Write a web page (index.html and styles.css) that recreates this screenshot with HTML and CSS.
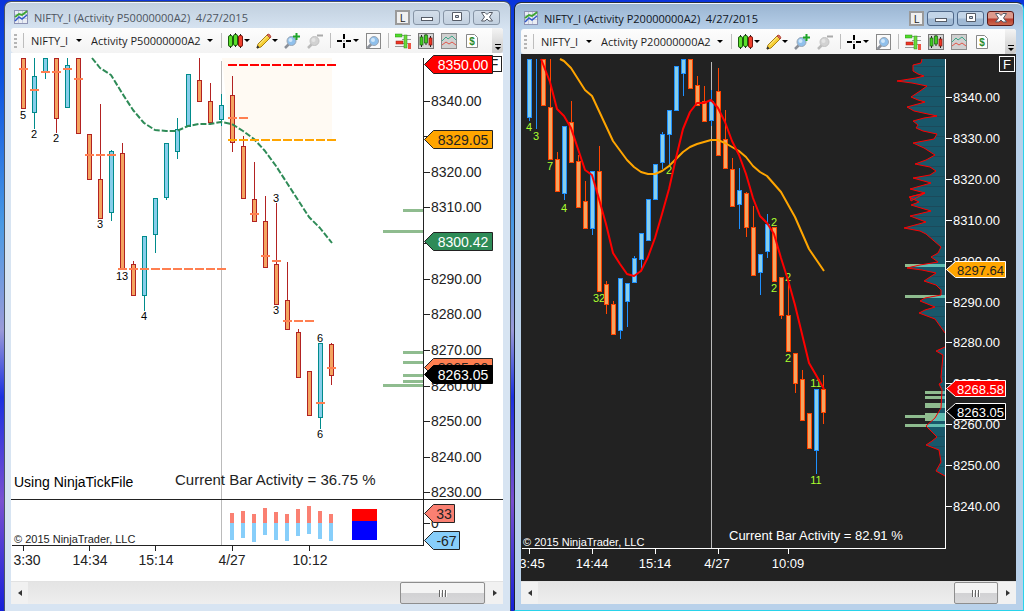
FILE: index.html
```html
<!DOCTYPE html>
<html lang="en">
<head>
    <meta charset="utf-8">
    <title>NIFTY_I Charts</title>
    <link rel="stylesheet" href="styles.css">
</head>
<body>
    <!-- shared icons -->
    <svg class="icons" aria-hidden="true">
        <symbol id="i-app" viewBox="0 0 14 14">
            <rect x=".5" y=".5" width="13" height="13" fill="#e9edf4" stroke="#8d93b5"/>
            <path d="M1 4.500h12M1 8.500h12M4.500 1v12M8.500 1v12" stroke="#c3c9dd"/>
            <path d="M1 11l4-4 3 2 5-4" fill="none" stroke="#3158c8" stroke-width="1.500"/>
            <path d="M1 7l4-3 3 1 4-3 1-1" fill="none" stroke="#3fa535" stroke-width="2"/>
        </symbol>
        <symbol id="i-candles" viewBox="0 0 16 16">
            <path d="M2.500 1v14M7.500 0v14M12.500 1v14" stroke="#222"/>
            <rect x=".5" y="2.500" width="4" height="11" rx="1.500" fill="#5be02c" stroke="#1b5c10"/>
            <rect x="5.500" y="1.500" width="4" height="11" rx="1.500" fill="#5be02c" stroke="#1b5c10"/>
            <rect x="10.500" y="2.500" width="4" height="11" rx="1.500" fill="#f0402c" stroke="#7c1710"/>
        </symbol>
        <symbol id="i-pencil" viewBox="0 0 16 16">
            <path d="M1 15l1-4L11 2l3 3-9 9z" fill="#f6cf35" stroke="#a98012"/>
            <path d="M3 11.500L11.500 3" stroke="#fff0a0"/>
            <path d="M11 2l1-1q2 0 3 3l-1 1z" fill="#e2705a" stroke="#b24a3c"/>
            <path d="M1 15l.6-2 1.400 1.400z" fill="#333" stroke="#333"/>
        </symbol>
        <symbol id="i-zoomin" viewBox="0 0 16 16">
            <path d="M1 15l4-4" stroke="#8a8f98" stroke-width="2.500"/>
            <circle cx="7.500" cy="8" r="4.500" fill="#8fc0ec" stroke="#9aa6b4"/>
            <circle cx="6.500" cy="7" r="2" fill="#cfe6fa"/>
            <path d="M12.500 0v7M9 3.500h7" stroke="#1fa52a" stroke-width="2"/>
        </symbol>
        <symbol id="i-zoomout" viewBox="0 0 16 16">
            <path d="M1 15l4-4" stroke="#bbb" stroke-width="2.500"/>
            <circle cx="7.500" cy="8" r="4.500" fill="#d2d2d2" stroke="#c2c2c2"/>
            <circle cx="6.500" cy="7" r="2" fill="#e4e4e4"/>
            <path d="M10 2.500h6" stroke="#aaa" stroke-width="2"/>
        </symbol>
        <symbol id="i-cross" viewBox="0 0 16 16">
            <path d="M7 1v5M7 10v5M0 8h5M9 8h5" stroke="#000" stroke-width="2"/>
            <rect x="6.500" y="7.500" width="1" height="1"/>
        </symbol>
        <symbol id="i-find" viewBox="0 0 16 16">
            <rect x="1.500" y=".5" width="14" height="15" fill="#fafafa" stroke="#888"/>
            <path d="M2.500 15l4-4" stroke="#8a8f98" stroke-width="2.500"/>
            <circle cx="9" cy="8" r="4.500" fill="#8fc0ec" stroke="#9aa6b4"/>
            <circle cx="8" cy="7" r="2" fill="#cfe6fa"/>
        </symbol>
        <symbol id="i-dom" viewBox="0 0 16 16">
            <path d="M7 2.500h9M7 6.500h9M7 10.500h9M0 13.500h9" stroke="#999"/>
            <rect x="0" y="1" width="7" height="3" fill="#4fdc2a" stroke="#2c8a18" stroke-width=".5"/>
            <rect x="1" y="8" width="7" height="3" fill="#ee3524" stroke="#982015" stroke-width=".5"/>
            <rect x="9" y="2" width="3" height="13" fill="#6bdc3a" stroke="#2c8a18" stroke-width=".5"/>
            <rect x="13" y="10" width="3" height="6" fill="#ee5544"/>
        </symbol>
        <symbol id="i-bars" viewBox="0 0 16 16">
            <rect x=".5" y=".5" width="15" height="15" fill="#d4d4d4" stroke="#777"/>
            <path d="M3.500 2v12M8 1v11M12.500 3v11" stroke="#222"/>
            <rect x="2" y="4" width="3" height="8" fill="#43cc22" stroke="#1b5c10" stroke-width=".7"/>
            <rect x="6.500" y="2" width="3" height="8" fill="#43cc22" stroke="#1b5c10" stroke-width=".7"/>
            <rect x="11" y="5" width="3" height="7" fill="#ee3524" stroke="#7c1710" stroke-width=".7"/>
        </symbol>
        <symbol id="i-lines" viewBox="0 0 16 16">
            <rect x=".5" y=".5" width="15" height="15" fill="#d0d0d0" stroke="#8c8c8c"/>
            <path d="M1 8l4-4 2 2 4-3 4 4" fill="none" stroke="#3da889"/>
            <path d="M1 12l4-3 3 2 3-2 4 3" fill="none" stroke="#e2564a"/>
        </symbol>
        <symbol id="i-dollar" viewBox="0 0 16 16">
            <path d="M2.500 1.500h8l3 3v10h-11z" fill="#fff" stroke="#888"/>
            <text x="8" y="12" class="dollar">$</text>
        </symbol>
    </svg>

    <main class="desktop">
        <section class="window">
            <header class="titlebar">
                <svg class="app-icon"><use href="#i-app"/></svg>
                <h1>NIFTY_I (Activity P50000000A2)&nbsp; 4/27/2015</h1>
                <button class="link-btn">L</button>
                <button class="win-btn" aria-label="Minimize"><svg viewBox="0 0 14 12"><rect x="1.500" y="6.500" width="11" height="3"/></svg></button>
                <button class="win-btn" aria-label="Maximize"><svg viewBox="0 0 14 12"><path d="M2.500 1.500h9v8h-9zM5.500 4.500v2h3v-2z"/></svg></button>
                <button class="win-btn" aria-label="Close"><svg viewBox="0 0 14 12"><path d="M1.500 1.500h3.500l2 2 2-2h3.500L9.500 6l3 4H9L7 8l-2 2H1.500l3-4z"/></svg></button>
            </header>
            <nav class="toolbar">
                <span class="grip"></span>
                <span class="sep"></span>
                <label class="combo instrument"><select aria-label="Instrument"><option>NIFTY_I</option></select></label>
                <label class="combo period"><select aria-label="Period"><option>Activity P50000000A2</option></select></label>
                <span class="sep"></span>
                <button class="tool drop" aria-label="Chart style"><svg><use href="#i-candles"/></svg></button>
                <button class="tool drop" aria-label="Draw"><svg><use href="#i-pencil"/></svg></button>
                <button class="tool" aria-label="Zoom in"><svg><use href="#i-zoomin"/></svg></button>
                <button class="tool" aria-label="Zoom out" disabled><svg><use href="#i-zoomout"/></svg></button>
                <span class="sep"></span>
                <button class="tool drop" aria-label="Cross hair"><svg><use href="#i-cross"/></svg></button>
                <button class="tool" aria-label="Data box"><svg><use href="#i-find"/></svg></button>
                <span class="sep"></span>
                <button class="tool" aria-label="Chart trader"><svg><use href="#i-dom"/></svg></button>
                <button class="tool" aria-label="Data series"><svg><use href="#i-bars"/></svg></button>
                <button class="tool" aria-label="Indicators"><svg><use href="#i-lines"/></svg></button>
                <button class="tool" aria-label="Strategies"><svg><use href="#i-dollar"/></svg></button>
                <button class="more" aria-label="More tools"></button>
            </nav>
            <svg class="chart light" id="chart1" viewBox="11 53 492 527" preserveAspectRatio="xMinYMin meet"></svg>
            <div class="scrollbar">
                <button class="arrow prev" aria-label="Scroll left"></button>
                <input type="range" value="100" aria-label="Scroll chart">
                <button class="arrow next" aria-label="Scroll right"></button>
            </div>
        </section>

        <section class="window active">
            <header class="titlebar">
                <svg class="app-icon"><use href="#i-app"/></svg>
                <h1>NIFTY_I (Activity P20000000A2)&nbsp; 4/27/2015</h1>
                <button class="link-btn">L</button>
                <button class="win-btn" aria-label="Minimize"><svg viewBox="0 0 14 12"><rect x="1.500" y="6.500" width="11" height="3"/></svg></button>
                <button class="win-btn" aria-label="Maximize"><svg viewBox="0 0 14 12"><path d="M2.500 1.500h9v8h-9zM5.500 4.500v2h3v-2z"/></svg></button>
                <button class="win-btn close" aria-label="Close"><svg viewBox="0 0 14 12"><path d="M1.500 1.500h3.500l2 2 2-2h3.500L9.500 6l3 4H9L7 8l-2 2H1.500l3-4z"/></svg></button>
            </header>
            <nav class="toolbar">
                <span class="grip"></span>
                <span class="sep"></span>
                <label class="combo instrument"><select aria-label="Instrument"><option>NIFTY_I</option></select></label>
                <label class="combo period"><select aria-label="Period"><option>Activity P20000000A2</option></select></label>
                <span class="sep"></span>
                <button class="tool drop" aria-label="Chart style"><svg><use href="#i-candles"/></svg></button>
                <button class="tool drop" aria-label="Draw"><svg><use href="#i-pencil"/></svg></button>
                <button class="tool" aria-label="Zoom in"><svg><use href="#i-zoomin"/></svg></button>
                <button class="tool" aria-label="Zoom out" disabled><svg><use href="#i-zoomout"/></svg></button>
                <span class="sep"></span>
                <button class="tool drop" aria-label="Cross hair"><svg><use href="#i-cross"/></svg></button>
                <button class="tool" aria-label="Data box"><svg><use href="#i-find"/></svg></button>
                <span class="sep"></span>
                <button class="tool" aria-label="Chart trader"><svg><use href="#i-dom"/></svg></button>
                <button class="tool" aria-label="Data series"><svg><use href="#i-bars"/></svg></button>
                <button class="tool" aria-label="Indicators"><svg><use href="#i-lines"/></svg></button>
                <button class="tool" aria-label="Strategies"><svg><use href="#i-dollar"/></svg></button>
                <button class="more" aria-label="More tools"></button>
            </nav>
            <svg class="chart dark" id="chart2" viewBox="521 54 495 526" preserveAspectRatio="xMinYMin meet"></svg>
            <div class="scrollbar short">
                <button class="arrow prev" aria-label="Scroll left"></button>
                <input type="range" value="100" aria-label="Scroll chart">
                <button class="arrow next" aria-label="Scroll right"></button>
            </div>
        </section>
    </main>

    <script src="charts.js"></script>
</body>
</html>
```

FILE: styles.css
```css
* {
    box-sizing: border-box;
}
body {
    margin: 0;
    font-family: "Open Sans", "Noto Sans", sans-serif;
    font-size: 11px;
    color: #1e1e1e;
}
button, select {
    font: inherit;
    color: inherit;
    border: none;
    background: none;
    padding: 0;
    margin: 0;
}
.icons {
    display: none;
}
.desktop {
    display: grid;
    grid-template-columns: 507fr 510fr;
    gap: 3px;
    height: 100vh;
    padding-left: 4px;
    overflow: hidden;
    background: linear-gradient(#0a34dc 0, #0a50e0 12%, #4a9ae4 37%, #9a9ad8 54%, #1a30e0 65%, #7a50d0 82%, #1420d8 100%);
}

/* windows */
.window {
    display: flex;
    flex-direction: column;
    min-width: 0;
    margin-top: 1px;
    padding: 0 7px 7px 6px;
    border: 1px solid #4b5563;
    border-bottom: none;
    border-radius: 7px 7px 0 0;
    background: linear-gradient(#c0cfde, #d7e4f2 28px);
    box-shadow: inset 0 1px 0 #f4f8fc;
}
.window.active {
    margin-top: 2px;
    padding-bottom: 6px;
    border-color: #2a3138 #29d3ea #29d3ea #1c2430;
    border-bottom: 1px solid #29d3ea;
    background: linear-gradient(#99b4d1, #b9d1ea 28px);
}
.titlebar {
    display: flex;
    align-items: center;
    gap: 3px;
    flex: none;
    height: 26px;
    padding: 4px 3px 0;
}
.active .titlebar {
    padding-right: 2px;
}
.app-icon {
    width: 14px;
    height: 14px;
}
.titlebar h1 {
    flex: 1;
    margin: 0 0 0 3px;
    font-size: 11px;
    font-weight: 400;
    white-space: nowrap;
    color: #4d5560;
}
.active h1 {
    color: #10161e;
}
.link-btn {
    width: 15px;
    height: 15px;
    border: 2px solid #9a9a9a;
    background: #f0f0f0;
    line-height: 11px;
}
.win-btn {
    display: flex;
    align-items: center;
    justify-content: center;
    width: 27px;
    height: 15px;
    border: 1px solid #8694a5;
    border-radius: 3px;
    background: linear-gradient(#d3deea, #c2d0df);
}
.win-btn svg {
    width: 14px;
    height: 12px;
    fill: #fff;
    fill-rule: evenodd;
    stroke: #555b66;
}
.active .win-btn {
    border-color: #50698a;
    background: linear-gradient(#c3d5e8 48%, #a0b9d4 52%);
}
.active .win-btn.close {
    border-color: #5b1a18;
    background: linear-gradient(#dd9a8c 48%, #b8392a 52%, #cc6a50);
}

/* toolbar */
.toolbar {
    display: flex;
    align-items: center;
    gap: 6px;
    flex: none;
    height: 25px;
    padding-left: 3px;
    border-radius: 3px;
    background: linear-gradient(#fdfdfd, #f3f3f3);
}
.grip {
    width: 3px;
    height: 14px;
    background: repeating-linear-gradient(#b5b5b5 0 2px, transparent 2px 4px);
}
.sep {
    width: 1px;
    height: 15px;
    background: #bdbdbd;
}
.combo {
    display: flex;
    align-items: center;
    justify-content: space-between;
    padding: 0 2px 0 1px;
}
.combo.instrument {
    width: 54px;
}
.combo.period {
    width: 125px;
}
.combo select {
    appearance: none;
    outline: none;
}
.combo::after, .drop::after {
    content: "";
    border: 3px solid transparent;
    border-top-color: #000;
    border-bottom: none;
}
.tool {
    display: flex;
    align-items: center;
    flex: none;
    width: 17px;
}
.tool.drop {
    width: 22px;
}
.tool svg {
    flex: none;
    width: 16px;
    height: 16px;
}
.dollar {
    font: bold 10px "Liberation Sans", sans-serif;
    text-anchor: middle;
    fill: #2c8a2c;
}
.more {
    display: flex;
    flex-direction: column;
    align-items: center;
    justify-content: flex-end;
    gap: 2px;
    width: 11px;
    height: 25px;
    margin-left: auto;
    padding-bottom: 3px;
    border-radius: 0 3px 3px 0;
    background: linear-gradient(#f4f4f4, #c9c9c9);
}
.more::before {
    content: "";
    width: 6px;
    height: 1px;
    background: #000;
}
.more::after {
    content: "";
    border: 3px solid transparent;
    border-top-color: #000;
    border-bottom: none;
}

/* charts */
.chart {
    display: block;
    flex: 1;
    width: 100%;
    min-height: 0;
    font-family: "Liberation Sans", Arial, sans-serif;
    font-size: 14px;
}
.light {
    background: #fff;
    fill: #222;
}
.dark {
    background: #222;
    fill: #fff;
    font-size: 13px;
}
.chart .bar {
    shape-rendering: crispEdges;
}
.chart .line {
    fill: none;
    stroke-width: 2;
    stroke-linejoin: round;
}
.chart .profile {
    fill: none;
    stroke: #f00;
    stroke-width: 1;
}
.chart .count, .chart .copy {
    font-size: 11px;
}
.light .activity {
    font-size: 15px;
}
.chart .mid {
    text-anchor: middle;
}

/* scrollbar */
.scrollbar {
    display: flex;
    flex: none;
    height: 23px;
    border-top: 1px solid #e2e2e2;
    background: #ececec;
}
.arrow {
    display: flex;
    align-items: center;
    justify-content: center;
    width: 17px;
    background: #f1f1f1;
}
.arrow::before {
    content: "";
    border: 3px solid transparent;
}
.arrow.prev::before {
    border-left: none;
    border-right: 4px solid #333;
}
.arrow.next::before {
    border-right: none;
    border-left: 4px solid #333;
}
.scrollbar input {
    appearance: none;
    flex: 1;
    min-width: 0;
    margin: 0 1px 0 0;
    background: linear-gradient(#e4e4e4, #eee);
}
.scrollbar input::-webkit-slider-thumb {
    appearance: none;
    width: 85px;
    height: 22px;
    border: 1px solid #8e8e8e;
    border-radius: 2px;
    background:
        repeating-linear-gradient(90deg, #666 0 1px, #fff 1px 2px, transparent 2px 3px) center / 8px 7px no-repeat,
        linear-gradient(#f4f4f4 48%, #d2d2d4 52%, #d8d8da);
}
.short input::-webkit-slider-thumb {
    width: 44px;
}
```

FILE: charts.js
```js
const NS = "http://www.w3.org/2000/svg";

function add(parent, tag, attrs, text) {
    const el = document.createElementNS(NS, tag);
    for (const key in attrs) el.setAttribute(key, attrs[key]);
    if (text !== undefined) el.textContent = text;
    parent.appendChild(el);
    return el;
}

function rect(svg, x, y, w, h, fill) {
    return add(svg, "rect", { x: x, y: y, width: w, height: h, fill: fill, class: "bar" });
}

function line(svg, points, color, extra) {
    return add(svg, "polyline", Object.assign({ points: points, stroke: color, class: "line" }, extra));
}

// bar = [up, high, body top, body bottom, low]
function candles(svg, startX, step, bars, up, down, upFill, downFill) {
    bars.forEach(function (b, i) {
        const x = startX + i * step;
        const color = b[0] ? up : down;
        rect(svg, x, b[1], 1, b[4] - b[1], color);
        if (b[3] > b[2]) {
            rect(svg, x - 2, b[2], 5, b[3] - b[2], color);
            rect(svg, x - 1, b[2] + 1, 3, b[3] - b[2] - 2, b[0] ? upFill : downFill);
        }
    });
}

// labels = [text, x, baseline]
function counts(svg, labels, color) {
    labels.forEach(function (l) {
        add(svg, "text", { x: l[1], y: l[2], fill: color, class: "count mid" }, l[0]);
    });
}

function priceAxis(svg, x, ticks, color) {
    ticks.forEach(function (t) {
        rect(svg, x, t[1], 6, 1, color);
        if (t[0]) add(svg, "text", { x: x + 7, y: t[1] + 5 }, t[0]);
    });
}

function timeAxis(svg, y, ticks, color) {
    ticks.forEach(function (t) {
        rect(svg, t[1], y, 1, 5, color);
        add(svg, "text", { x: t[2], y: y + 19, class: "mid" }, t[0]);
    });
}

function tag(svg, x, y, half, w, fill, stroke, color, text) {
    const p = [[x, y], [x + 9, y - half], [x + 9 + w, y - half], [x + 9 + w, y + half], [x + 9, y + half]];
    add(svg, "polygon", { points: p.join(" "), fill: fill, stroke: stroke });
    add(svg, "text", { x: x + 9 + w / 2, y: y + 5, fill: color, class: "mid" }, text);
}

/* ---- 50M chart ---- */
const c1 = document.getElementById("chart1");

add(c1, "polygon", { points: "222,58 332,58 332,139 230,139", fill: "#fffaf3" });
rect(c1, 221, 61, 1, 484, "#bbb");

candles(c1, 23, 11, [
    [0, 58, 58, 109, 109], [1, 58, 76, 113, 129], [1, 58, 58, 72, 79], [0, 58, 58, 119, 133],
    [1, 58, 65, 108, 108], [0, 58, 58, 134, 134], [0, 134, 134, 180, 180], [0, 104, 179, 219, 219],
    [1, 150, 151, 213, 221], [0, 143, 153, 269, 269], [0, 261, 264, 296, 296], [1, 236, 236, 296, 311],
    [1, 198, 198, 235, 253], [1, 143, 143, 198, 200], [1, 118, 129, 152, 159], [1, 74, 74, 127, 127],
    [0, 58, 80, 102, 102], [0, 83, 101, 123, 123], [1, 94, 105, 120, 126], [0, 76, 95, 143, 152],
    [0, 136, 146, 199, 199], [0, 162, 199, 222, 222], [0, 196, 221, 268, 268], [0, 203, 264, 305, 305],
    [0, 262, 300, 330, 330], [0, 329, 332, 378, 378], [0, 371, 371, 416, 416], [1, 343, 343, 418, 429],
    [0, 343, 344, 376, 385]
], "#008b8b", "#b22222", "#87ceeb", "#f4a460");

line(c1, "92,58 100,68 111,75 122,93 133,110 144,123 155,130 166,131 177,131 188,126 199,124 210,124 221,122 232,124 243,131 254,139 265,151 276,166 287,183 298,200 309,217 320,228 332,243", "#2e8b57", { "stroke-dasharray": "6 2" });

// level of each bar, in bar order
[68, 89, 71, 71, 68, 78, 154, 154, 154, 268, 268, 268, 268, 268, 268, 268, 268, 268, 268,
    117, 117, 213, 255, 260, 320, 320, 320, 402, 367].forEach(function (y, i) {
    rect(c1, 19 + i * 11, y, 9, 2, "#ff7f50");
});
for (let x = 228; x < 330; x += 11) {
    rect(c1, x, 64, 9, 2, "#f00");
    rect(c1, x, 139, 9, 2, "#ffa500");
}

counts(c1, [["5", 23, 119], ["2", 34, 138], ["2", 56, 142], ["3", 100, 228], ["13", 122, 280], ["4", 144, 320],
    ["3", 276, 202], ["3", 276, 314], ["6", 320, 342], ["6", 320, 438]], "#000");

[[403, 209], [383, 230], [403, 351], [403, 361], [403, 374], [403, 380], [383, 384]].forEach(function (b) {
    rect(c1, b[0], b[1], 423 - b[0], 3, "#8fbc8f");
});

// activity split histogram
[[513, 540], [511, 538], [514, 542], [508, 535], [512, 540], [514, 541], [509, 536], [506, 534], [511, 539], [514, 541]].forEach(function (b, i) {
    rect(c1, 230 + i * 11, b[0], 4, 523 - b[0], "#fa8072");
    rect(c1, 230 + i * 11, 523, 4, b[1] - 523, "#87cefa");
});
rect(c1, 352, 509, 25, 12, "#f00");
rect(c1, 352, 521, 25, 19, "#00f");

rect(c1, 423, 58, 1, 488, "#222");
rect(c1, 12, 545, 412, 1, "#222");
rect(c1, 11, 499, 492, 1, "#222");
priceAxis(c1, 424, [["8340.00", 101], ["", 136], ["8320.00", 172], ["8310.00", 207], ["", 243], ["8290.00", 279],
    ["8280.00", 314], ["8270.00", 350], ["8260.00", 386], ["8250.00", 421], ["8240.00", 457], ["8230.00", 492], ["0", 523]], "#222");
timeAxis(c1, 546, [["3:30", 23, 27], ["14:34", 89, 90], ["15:14", 155, 156], ["4/27", 232, 232], ["10:12", 309, 310]], "#222");

add(c1, "rect", { x: 486.5, y: 56.5, width: 15, height: 15, fill: "#fff", stroke: "#222" });
add(c1, "text", { x: 494, y: 69, class: "mid" }, "F");
tag(c1, 424.5, 64.5, 9, 59, "#f00", "#222", "#fff", "8350.00");
tag(c1, 424.5, 139.5, 9, 59, "#ffa500", "#222", "#222", "8329.05");
tag(c1, 424.5, 241.5, 9, 59, "#2e8b57", "#222", "#fff", "8300.42");
tag(c1, 424.5, 367.5, 9, 59, "#ff7f50", "#222", "#222", "8265.00");
tag(c1, 424.5, 374.5, 9, 59, "#000", "#000", "#fff", "8263.05");
tag(c1, 424.5, 513.5, 9, 21, "#fa8072", "#222", "#222", "33");
tag(c1, 424.5, 540.5, 9, 26, "#87cefa", "#222", "#222", "-67");

add(c1, "text", { x: 14, y: 487, fill: "#000" }, "Using NinjaTickFile");
add(c1, "text", { x: 175, y: 485, class: "activity" }, "Current Bar Activity = 36.75 %");
add(c1, "text", { x: 14, y: 543, class: "copy" }, "© 2015 NinjaTrader, LLC");

/* ---- 20M chart ---- */
const c2 = document.getElementById("chart2");

counts(c2, [["4", 529, 131], ["3", 536, 140], ["7", 550, 170], ["4", 564, 212], ["32", 599, 302], ["2", 669, 174],
    ["2", 774, 226], ["2", 774, 292], ["2", 788, 281], ["2", 788, 362], ["11", 816, 387], ["11", 816, 484]], "#adff2f");
rect(c2, 711, 62, 1, 486, "#bbb");

candles(c2, 529, 7, [
    [1, 59, 59, 118, 121], [1, 59, 59, 59, 129], [0, 59, 59, 106, 106], [0, 59, 107, 160, 160],
    [0, 152, 159, 192, 192], [1, 126, 126, 194, 200], [0, 101, 122, 163, 163], [0, 155, 161, 208, 208],
    [0, 181, 201, 229, 229], [1, 171, 171, 229, 235], [0, 146, 171, 292, 292], [0, 281, 284, 305, 314],
    [0, 301, 304, 335, 335], [1, 278, 278, 331, 339], [1, 283, 283, 302, 327], [1, 256, 258, 283, 283],
    [1, 233, 233, 260, 270], [1, 199, 199, 241, 241], [1, 164, 164, 200, 200], [1, 132, 134, 163, 169],
    [1, 110, 110, 135, 164], [1, 66, 66, 111, 111], [1, 59, 59, 74, 96], [0, 59, 59, 89, 89],
    [0, 76, 85, 106, 106], [0, 86, 101, 122, 122], [1, 90, 101, 121, 126], [0, 68, 91, 156, 156],
    [0, 110, 139, 169, 169], [0, 158, 169, 207, 207], [1, 168, 190, 205, 229], [0, 192, 193, 228, 237],
    [0, 206, 227, 276, 276], [1, 254, 254, 273, 295], [1, 214, 224, 252, 258], [0, 227, 227, 282, 282],
    [0, 277, 277, 316, 319], [0, 280, 315, 352, 352], [0, 353, 353, 384, 393], [0, 370, 379, 421, 421],
    [0, 413, 413, 449, 449], [1, 389, 389, 451, 474], [0, 375, 389, 413, 424]
], "#1e90ff", "#ff4500", "#87ceeb", "#f4a460");

line(c2, "560,59 564,61 571,68 585,90 592,96 599,111 613,141 627,160 634,167 641,172 648,174 655,174 662,171 669,166 683,152 690,147 697,144 704,142 711,140 718,140 725,143 732,147 739,151 746,157 753,166 760,172 767,176 774,184 781,192 795,217 809,249 824,271", "#ffa500");
line(c2, "541,59 543,64 550,82 557,109 564,116 571,128 578,149 585,170 592,175 599,199 606,224 613,253 620,264 627,274 634,276 641,271 648,257 655,238 662,214 669,189 676,158 683,129 690,112 697,103 704,103 711,100 718,108 725,122 732,141 739,155 746,174 753,198 760,216 767,223 774,234 781,258 788,280 795,305 802,334 809,363 816,375 824,389", "#f00");

// volume profile, two runs with an untraded gap between them
const upper = "922,59 921,63 913,65 913,71 918,74 924,76 916,78 897,81 912,83 927,86 920,91 911,97 918,100 925,102 907,107 914,111 937,116 924,118 913,121 918,125 916,128 923,131 937,134 934,139 913,143 924,148 935,155 926,160 915,164 930,167 936,171 930,175 913,178 931,183 910,189 925,193 910,197 911,201 925,193 909,197 919,202 911,205 931,211 910,216 926,222 904,228 920,231 926,234 941,247 938,253 931,257 938,262 920,265 907,268 922,270 936,273 924,281 936,285 941,290 941,295 925,298 920,301 935,307 925,310 919,313 935,319 945,333";
const lower = "945,347 936,351 943,355 941,377 942,382 939,384 942,390 941,408 935,418 926,426 937,437 932,441 926,445 939,450 941,462 936,471 945,476";

const clip = add(c2, "clipPath", { id: "profile" });
add(clip, "polygon", { points: upper + " 945,59" });
add(clip, "polygon", { points: lower });

const marks = [[905, 264, 3], [905, 295, 3], [925, 391, 3], [925, 396, 3], [925, 403, 5], [925, 413, 8], [905, 415, 3], [905, 424, 3]];
marks.forEach(function (m) {
    rect(c2, m[0], m[1], 945 - m[0], m[2], "#8fbc8f");
});
const profile = add(c2, "g", { "clip-path": "url(#profile)" });
rect(profile, 890, 59, 55, 420, "#18586b");
for (let y = 66; y < 476; y += 10) rect(profile, 890, y, 55, 1, "#1b4a5b");
marks.forEach(function (m) {
    rect(profile, m[0], m[1], 945 - m[0], m[2], "#60bdb1");
});
add(c2, "polyline", { points: upper, class: "profile" });
add(c2, "polyline", { points: lower, class: "profile" });

rect(c2, 945, 59, 1, 490, "#fff");
rect(c2, 522, 548, 424, 1, "#fff");
priceAxis(c2, 946, [["8340.00", 97], ["8330.00", 138], ["8320.00", 179], ["8310.00", 220], ["8300.00", 261],
    ["8290.00", 302], ["8280.00", 342], ["8270.00", 383], ["8260.00", 424], ["8250.00", 465], ["8240.00", 506]], "#fff");
timeAxis(c2, 549, [["3:45", 529, 532], ["14:44", 592, 592], ["15:14", 655, 655], ["4/27", 718, 717], ["10:09", 788, 788]], "#fff");

add(c2, "rect", { x: 999.5, y: 56.5, width: 15, height: 15, fill: "#222", stroke: "#fff" });
add(c2, "text", { x: 1007, y: 69, class: "mid" }, "F");
tag(c2, 946.5, 269.5, 8, 50, "#ffa500", "#fff", "#222", "8297.64");
tag(c2, 946.5, 388.5, 8, 50, "#f00", "#fff", "#fff", "8268.58");
tag(c2, 946.5, 411.5, 8, 50, "#000", "#fff", "#fff", "8263.05");

add(c2, "text", { x: 729, y: 540, class: "activity" }, "Current Bar Activity = 82.91 %");
add(c2, "text", { x: 523, y: 546, class: "copy" }, "© 2015 NinjaTrader, LLC");
```
